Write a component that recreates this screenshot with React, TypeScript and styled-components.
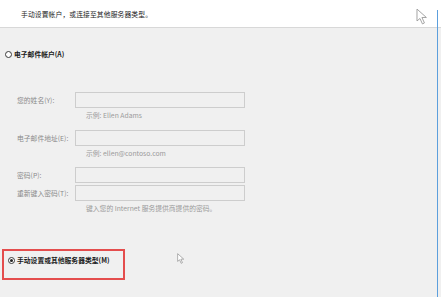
import React from "react";
import styled, { createGlobalStyle } from "styled-components";

/** Constants */
const FONT = `"Noto Sans CJK SC", "Noto Sans", sans-serif`;

const GlobalStyle = createGlobalStyle`
  html, body {
    margin: 0;
    padding: 0;
    background: #f0f0f0;
  }
  body {
    font-family: ${FONT};
  }
`;

const Window = styled.div`
  position: relative;
  width: 441px;
  height: 297px;
  overflow: hidden;
  background: #f0f0f0;
  display: flex;
  flex-direction: column;
`;

const Header = styled.header`
  height: 28px;
  flex: none;
  box-sizing: border-box;
  background: #ffffff;
  border-bottom: 1px solid #d8d8d8;
  display: flex;
  align-items: center;
  padding-left: 21px;
  padding-top: 1px;
  font-size: 6.8px;
  color: #222;
  letter-spacing: 0.1px;
`;

const Body = styled.main`
  display: flex;
  flex-direction: column;
  padding-top: 21px;
`;

const RadioRow = styled.label`
  display: flex;
  align-items: center;
  gap: 2px;
  height: 10px;
  font-size: 6.8px;
  font-weight: 700;
  color: #1a1a1a;
  white-space: nowrap;
`;

const RadioDot = styled.span<{ $checked?: boolean }>`
  width: 7px;
  height: 7px;
  box-sizing: border-box;
  border-radius: 50%;
  border: 1px solid #3a3a3a;
  background: #fff;
  display: flex;
  align-items: center;
  justify-content: center;

  &::after {
    content: "";
    width: 3px;
    height: 3px;
    border-radius: 50%;
    background: ${(p) => (p.$checked ? "#222" : "transparent")};
  }
`;

const EmailChoice = styled.div`
  padding-left: 5px;
`;

const Form = styled.div`
  display: flex;
  flex-direction: column;
  margin-top: 33px;
  padding-left: 17px;
`;

const Group = styled.div<{ $gapAfter?: number }>`
  display: flex;
  flex-direction: column;
  gap: 2px;
  margin-bottom: ${(p) => p.$gapAfter ?? 0}px;
`;

const FieldRow = styled.div`
  display: flex;
  align-items: center;
  height: 16px;
`;

const Label = styled.span`
  width: 58px;
  font-size: 6.8px;
  color: #8a8a8a;
  white-space: nowrap;
`;

const Input = styled.div`
  width: 170px;
  height: 16px;
  box-sizing: border-box;
  border: 1px solid #cdcdcd;
  background: #f0f0f0;
`;

const Hint = styled.div`
  margin-top: 1px;
  padding-left: 69px;
  height: 8px;
  line-height: 8px;
  font-size: 6.8px;
  color: #9a9a9a;
  white-space: nowrap;
`;

const Highlight = styled.div`
  margin-top: 37px;
  margin-left: 2px;
  width: 123px;
  height: 31px;
  box-sizing: border-box;
  border: 2px solid #e44d4d;
  padding: 4px 0 0 4px;
`;

const WindowEdge = styled.div`
  position: absolute;
  top: 10px;
  right: 3px;
  bottom: 0;
  width: 1.5px;
  background: #5c9fdd;
`;

const Pointer = styled.svg<{ $x: number; $y: number }>`
  position: absolute;
  left: ${(p) => p.$x}px;
  top: ${(p) => p.$y}px;
`;

const Cursor: React.FC<{ x: number; y: number; size: number; stroke: string }> = ({
  x,
  y,
  size,
  stroke,
}) => (
  <Pointer
    $x={x}
    $y={y}
    width={size * 0.7}
    height={size}
    viewBox="0 0 12 17"
  >
    <path
      d="M1 1 L1 13 L4 10.5 L6.5 16 L8.5 15 L6 9.5 L10.5 9.5 Z"
      fill="#ffffff"
      stroke={stroke}
      strokeWidth="0.9"
      strokeLinejoin="round"
    />
  </Pointer>
);

const App: React.FC = () => (
  <>
    <GlobalStyle />
    <Window>
      <Header>手动设置帐户，或连接至其他服务器类型。</Header>
      <Body>
        <EmailChoice>
          <RadioRow>
            <RadioDot />
            电子邮件帐户(A)
          </RadioRow>
        </EmailChoice>

        <Form>
          <Group $gapAfter={11}>
            <FieldRow>
              <Label>您的姓名(Y):</Label>
              <Input />
            </FieldRow>
            <Hint>示例: Ellen Adams</Hint>
          </Group>
          <Group $gapAfter={10}>
            <FieldRow>
              <Label>电子邮件地址(E):</Label>
              <Input />
            </FieldRow>
            <Hint>示例: ellen@contoso.com</Hint>
          </Group>
          <Group>
            <FieldRow>
              <Label>密码(P):</Label>
              <Input />
            </FieldRow>
            <FieldRow>
              <Label>重新键入密码(T):</Label>
              <Input />
            </FieldRow>
            <Hint>键入您的 Internet 服务提供商提供的密码。</Hint>
          </Group>
        </Form>

        <Highlight>
          <RadioRow>
            <RadioDot $checked />
            手动设置或其他服务器类型(M)
          </RadioRow>
        </Highlight>
      </Body>

      <WindowEdge />
      <Cursor x={416} y={8} size={17} stroke="#9a9a9a" />
      <Cursor x={177} y={253} size={11} stroke="#7a7a7a" />
    </Window>
  </>
);

export default App;
